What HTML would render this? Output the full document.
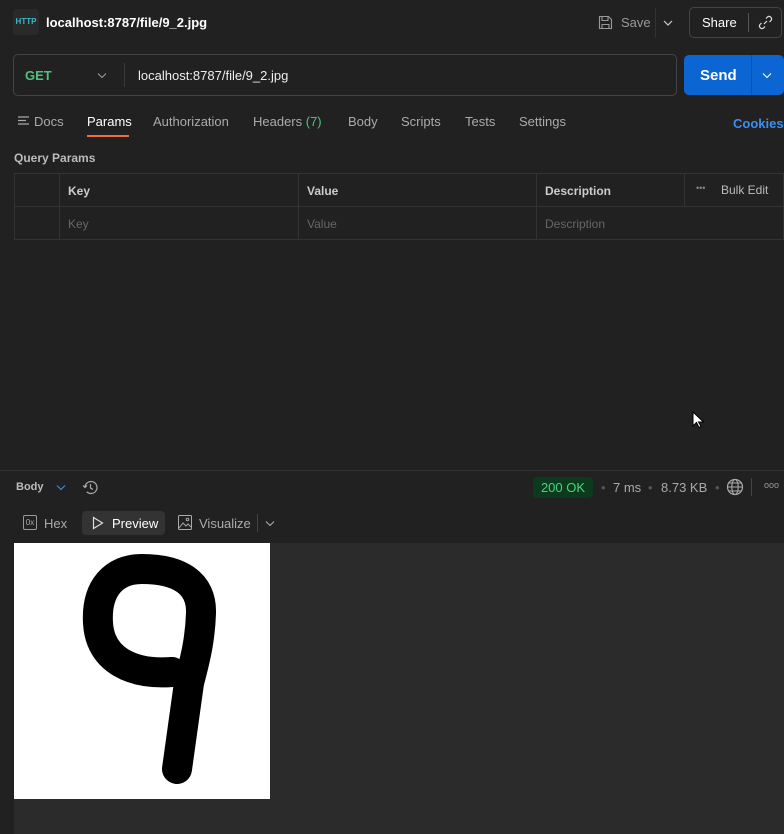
<!DOCTYPE html>
<html><head><style>
*{box-sizing:border-box;margin:0;padding:0}
body{width:784px;height:834px;background:#212121;font-family:"Liberation Sans",sans-serif;color:#ccc;position:relative;overflow:hidden;font-size:13px}
.a{position:absolute}
</style></head><body>
<div class="a" style="left:13px;top:9px;width:26px;height:26px;background:#2a2a2a;border-radius:4px;color:#3fb6c6;font-size:8px;text-align:center;line-height:26px;font-weight:bold">HTTP</div>
<div class="a" style="left:46px;top:15px;color:#fff;font-weight:bold;font-size:13px">localhost:8787/file/9_2.jpg</div>
<svg class="a" style="left:598px;top:15px" width="15" height="15" viewBox="0 0 15 15"><path d="M1.5 1.5h9l3 3v9h-12z M4 1.5v4h6v-4 M4 13.5v-4h7v4" fill="none" stroke="#999" stroke-width="1.1"/></svg>
<div class="a" style="left:621px;top:15px;color:#999">Save</div>
<div class="a" style="left:655px;top:8px;width:1px;height:30px;background:#333"></div>
<svg class="a" style="left:663px;top:19px" width="10" height="8"><path d="M1 2l4 4 4-4" fill="none" stroke="#ccc" stroke-width="1.2"/></svg>
<div class="a" style="left:689px;top:7px;width:93px;height:31px;border:1px solid #444;border-radius:5px"></div>
<div class="a" style="left:702px;top:15px;color:#fff">Share</div>
<div class="a" style="left:748px;top:13px;width:1px;height:19px;background:#555"></div>
<svg class="a" style="left:758px;top:15px" width="15" height="15" viewBox="0 0 15 15"><path d="M6 9l3-3 M8 3.5l1.5-1.5a2.5 2.5 0 013.5 3.5L11.5 7 M7 11.5L5.5 13A2.5 2.5 0 012 9.5L3.5 8" fill="none" stroke="#ddd" stroke-width="1.2"/></svg>
<div class="a" style="left:13px;top:54px;width:664px;height:42px;border:1px solid #444;border-radius:5px"></div>
<div class="a" style="left:25px;top:68px;color:#4fc27a;font-weight:bold">GET</div>
<svg class="a" style="left:97px;top:72px" width="10" height="7"><path d="M1 1.5l4 4 4-4" fill="none" stroke="#999" stroke-width="1.1"/></svg>
<div class="a" style="left:124px;top:63px;width:1px;height:24px;background:#3a3a3a"></div>
<div class="a" style="left:138px;top:68px;color:#eee">localhost:8787/file/9_2.jpg</div>
<div class="a" style="left:684px;top:55px;width:100px;height:40px;background:#0b66d4;border-radius:5px"></div>
<div class="a" style="left:751px;top:55px;width:1px;height:40px;background:#0a54ae"></div>
<div class="a" style="left:700px;top:67px;color:#fff;font-weight:bold;font-size:15px">Send</div>
<svg class="a" style="left:762px;top:72px" width="10" height="7"><path d="M1 1.5l4 4 4-4" fill="none" stroke="#fff" stroke-width="1.1"/></svg>
<svg class="a" style="left:18px;top:115px" width="12" height="12"><path d="M0 2h11M0 5.5h8M0 9h11" stroke="#aaa" stroke-width="1.2"/></svg>
<div class="a" style="left:34px;top:114px;color:#aaa">Docs</div>
<div class="a" style="left:87px;top:114px;color:#fff">Params</div>
<div class="a" style="left:87px;top:135px;width:42px;height:2px;background:#f26b3a"></div>
<div class="a" style="left:153px;top:114px;color:#aaa">Authorization</div>
<div class="a" style="left:253px;top:114px;color:#aaa">Headers <span style="color:#4fc27a">(7)</span></div>
<div class="a" style="left:348px;top:114px;color:#aaa">Body</div>
<div class="a" style="left:401px;top:114px;color:#aaa">Scripts</div>
<div class="a" style="left:465px;top:114px;color:#aaa">Tests</div>
<div class="a" style="left:519px;top:114px;color:#aaa">Settings</div>
<div class="a" style="left:733px;top:116px;color:#3b8ff0;font-weight:bold">Cookies</div>
<div class="a" style="left:14px;top:151px;color:#bbb;font-weight:bold;font-size:12px">Query Params</div>
<div class="a" style="left:14px;top:173px;width:770px;height:67px;border:1px solid #333"></div>
<div class="a" style="left:14px;top:206px;width:770px;height:1px;background:#333"></div>
<div class="a" style="left:59px;top:173px;width:1px;height:67px;background:#333"></div>
<div class="a" style="left:298px;top:173px;width:1px;height:67px;background:#333"></div>
<div class="a" style="left:536px;top:173px;width:1px;height:67px;background:#333"></div>
<div class="a" style="left:684px;top:173px;width:1px;height:33px;background:#333"></div>
<div class="a" style="left:68px;top:184px;color:#ccc;font-weight:bold;font-size:12px">Key</div>
<div class="a" style="left:307px;top:184px;color:#ccc;font-weight:bold;font-size:12px">Value</div>
<div class="a" style="left:545px;top:184px;color:#ccc;font-weight:bold;font-size:12px">Description</div>
<div class="a" style="left:696px;top:183px;color:#888;font-size:9px">•••</div>
<div class="a" style="left:721px;top:183px;color:#bbb;font-size:12px">Bulk Edit</div>
<div class="a" style="left:68px;top:217px;color:#666;font-size:12px">Key</div>
<div class="a" style="left:307px;top:217px;color:#666;font-size:12px">Value</div>
<div class="a" style="left:545px;top:217px;color:#666;font-size:12px">Description</div>
<svg class="a" style="left:692px;top:411px" width="12" height="18"><path d="M1 1v14l3.5-3.5 2.5 5 2-1-2.5-4.5h5z" fill="#fff" stroke="#000" stroke-width="1"/></svg>
<div class="a" style="left:0;top:470px;width:784px;height:1px;background:#333"></div>
<div class="a" style="left:16px;top:481px;color:#bbb;font-weight:bold;font-size:11px">Body</div>
<svg class="a" style="left:56px;top:484px" width="10" height="7"><path d="M1 1.5l4 4 4-4" fill="none" stroke="#3b8ff0" stroke-width="1.1"/></svg>
<svg class="a" style="left:82px;top:479px" width="17" height="17" viewBox="0 0 17 17"><path d="M3 8.5a6 6 0 1 1 1.8 4.3 M1 6.5l2 2 2-2 M8.5 5v4l2.5 1.5" fill="none" stroke="#aaa" stroke-width="1.2"/></svg>
<div class="a" style="left:533px;top:477px;width:60px;height:21px;background:#0b3a1c;border-radius:4px;color:#4fd27f;text-align:center;line-height:21px">200 OK</div>
<div class="a" style="left:601px;top:480px;color:#555">•</div>
<div class="a" style="left:613px;top:480px;color:#aaa">7 ms</div>
<div class="a" style="left:648px;top:480px;color:#555">•</div>
<div class="a" style="left:661px;top:480px;color:#aaa">8.73 KB</div>
<div class="a" style="left:715px;top:480px;color:#555">•</div>
<svg class="a" style="left:726px;top:478px" width="18" height="18" viewBox="0 0 18 18"><circle cx="9" cy="9" r="7.5" fill="none" stroke="#aaa" stroke-width="1.2"/><ellipse cx="9" cy="9" rx="3.2" ry="7.5" fill="none" stroke="#aaa" stroke-width="1.1"/><path d="M1.5 9h15M3 5h12M3 13h12" stroke="#aaa" stroke-width="1"/></svg>
<div class="a" style="left:751px;top:478px;width:1px;height:18px;background:#444"></div>
<div class="a" style="left:764px;top:480px;color:#999;font-size:9px">ooo</div>
<div class="a" style="left:23px;top:515px;width:14px;height:15px;border:1px solid #999;border-radius:2px;color:#aaa;font-size:8px;text-align:center;line-height:13px">0x</div>
<div class="a" style="left:44px;top:516px;color:#aaa">Hex</div>
<div class="a" style="left:82px;top:511px;width:83px;height:24px;background:#333;border-radius:4px"></div>
<svg class="a" style="left:92px;top:516px" width="12" height="14"><path d="M1.5 1.5l9 5.5-9 5.5z" fill="none" stroke="#ddd" stroke-width="1.2"/></svg>
<div class="a" style="left:112px;top:516px;color:#fff">Preview</div>
<svg class="a" style="left:178px;top:515px" width="14" height="15"><rect x="0.5" y="0.5" width="13" height="14" rx="1" fill="none" stroke="#aaa"/><path d="M1 13l4-5 3 3 2-2 3 3" fill="none" stroke="#aaa"/><circle cx="9.5" cy="4.5" r="1.3" fill="none" stroke="#aaa"/></svg>
<div class="a" style="left:199px;top:516px;color:#aaa">Visualize</div>
<div class="a" style="left:257px;top:514px;width:1px;height:18px;background:#444"></div>
<svg class="a" style="left:265px;top:520px" width="10" height="7"><path d="M1 1.5l4 4 4-4" fill="none" stroke="#aaa" stroke-width="1.1"/></svg>
<div class="a" style="left:14px;top:543px;width:770px;height:291px;background:#2b2b2b"></div>
<svg class="a" style="left:14px;top:543px" width="256" height="256" viewBox="0 0 256 256"><rect width="256" height="256" fill="#fff"/><path d="M158 129 C120 132 86 118 84 80 C82 45 100 26 128 26 C165 26 188 40 187 70 C186 100 180 120 175 140 L163 226" fill="none" stroke="#000" stroke-width="30" stroke-linecap="round" stroke-linejoin="round"/></svg>
</body></html>
